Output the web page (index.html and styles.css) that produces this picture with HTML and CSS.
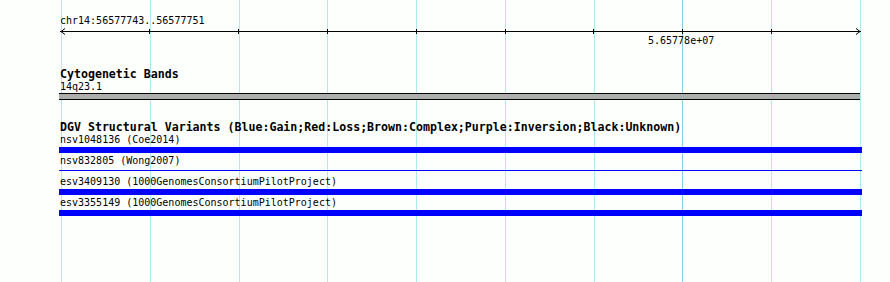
FILE: index.html
```html
<!DOCTYPE html>
<html lang="en">
<head>
    <meta charset="UTF-8">
    <title>chr14:56577743..56577751</title>
    <link rel="stylesheet" href="styles.css">
</head>
<body>
    <div class="panel">
        <!-- background grid, one line per tick -->
        <div class="grid">
            <span class="gridline"></span>
            <span class="gridline"></span>
            <span class="gridline"></span>
            <span class="gridline"></span>
            <span class="gridline"></span>
            <span class="gridline"></span>
            <span class="gridline"></span>
            <span class="gridline major"></span>
            <span class="gridline"></span>
            <span class="gridline"></span>
        </div>

        <div class="tracks">
            <div class="ruler-label">chr14:56577743..56577751</div>
            <svg class="ruler" width="802" height="7" viewBox="0 0 802 7" shape-rendering="crispEdges">
                <line x1="0" y1="3.5" x2="801" y2="3.5" stroke="#000" stroke-width="1"/>
                <polyline points="5,0.5 1,3.5 5,6.5" fill="none" stroke="#000" stroke-width="1" shape-rendering="auto"/>
                <polyline points="796,0.5 800,3.5 796,6.5" fill="none" stroke="#000" stroke-width="1" shape-rendering="auto"/>
                <line x1="89.5" y1="1" x2="89.5" y2="6" stroke="#000"/>
                <line x1="178.5" y1="1" x2="178.5" y2="6" stroke="#000"/>
                <line x1="267.5" y1="1" x2="267.5" y2="6" stroke="#000"/>
                <line x1="356.5" y1="1" x2="356.5" y2="6" stroke="#000"/>
                <line x1="445.5" y1="1" x2="445.5" y2="6" stroke="#000"/>
                <line x1="533.5" y1="1" x2="533.5" y2="6" stroke="#000"/>
                <line x1="622.5" y1="1" x2="622.5" y2="6" stroke="#000"/>
                <line x1="711.5" y1="1" x2="711.5" y2="6" stroke="#000"/>
            </svg>
            <div class="tick-label">5.65778e+07</div>

            <div class="track cyto">
                <div class="track-title">Cytogenetic Bands</div>
                <div class="band-name">14q23.1</div>
                <div class="band"></div>
            </div>

            <div class="track dgv">
                <div class="track-title">DGV Structural Variants (Blue:Gain;Red:Loss;Brown:Complex;Purple:Inversion;Black:Unknown)</div>
                <div class="feature">
                    <div class="feature-name">nsv1048136 (Coe2014)</div>
                    <div class="feature-bar"></div>
                </div>
                <div class="feature">
                    <div class="feature-name">nsv832805 (Wong2007)</div>
                    <div class="feature-bar thin"></div>
                </div>
                <div class="feature">
                    <div class="feature-name">esv3409130 (1000GenomesConsortiumPilotProject)</div>
                    <div class="feature-bar"></div>
                </div>
                <div class="feature">
                    <div class="feature-name">esv3355149 (1000GenomesConsortiumPilotProject)</div>
                    <div class="feature-bar"></div>
                </div>
            </div>
        </div>
    </div>
</body>
</html>
```

FILE: styles.css
```css
body {
    margin: 0;
    background-color: #fdfffd;
    font-family: "DejaVu Sans Mono", "Liberation Mono", monospace;
    font-size: 10px;
    color: #000;
}
.panel {
    position: relative;
    width: 890px;
    height: 282px;
    overflow: hidden;
}
.grid {
    position: absolute;
    top: 0;
    bottom: 0;
    left: 61px;
    width: 800px;
    display: flex;
    justify-content: space-between;
}
.gridline {
    width: 1px;
    background-color: #aee9f0;
}
.gridline.major {
    background-color: #88cdea;
}
.tracks {
    position: relative;
    padding-top: 15px;
    padding-left: 60px;
}
/* 11px line + 2px padding keeps the 13px row but lifts the text 1px */
.ruler-label,
.tick-label,
.feature-name {
    line-height: 11px;
    padding-bottom: 2px;
}
.ruler {
    display: block;
}
.tick-label {
    padding-left: 588px;
}
.cyto {
    margin-top: 20px;
}
.track-title {
    font-weight: bold;
    font-size: 11.6px;
    line-height: 13px;
}
.band-name {
    line-height: 11px;
    padding-bottom: 1px;
}
.band {
    width: 801px;
    height: 5px;
    margin-left: -1px;
    background-color: #adadad;
    border-top: 1px solid #000;
    border-bottom: 1px solid #000;
}
.dgv {
    margin-top: 21px;
}
.feature {
    padding-bottom: 2px;
}
.feature-bar {
    width: 803px;
    height: 6px;
    margin-left: -1px;
    background-color: #0000ff;
}
.feature-bar.thin {
    height: 1px;
    margin-top: 2px;
    margin-bottom: 3px;
}
```
